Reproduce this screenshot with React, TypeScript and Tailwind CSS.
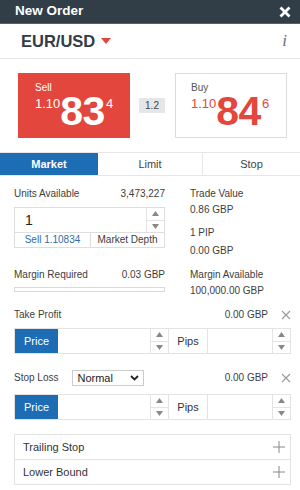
import React from "react";

const Spinner = () => (
  <div className="flex flex-col w-[18px] border-l border-[#e3e3e3] self-stretch">
    <div className="flex-1 flex items-center justify-center border-b border-[#e3e3e3]">
      <svg width="7" height="5" viewBox="0 0 7 5"><path d="M0 5 L3.5 0 L7 5 Z" fill="#888" /></svg>
    </div>
    <div className="flex-1 flex items-center justify-center">
      <svg width="7" height="5" viewBox="0 0 7 5"><path d="M0 0 L3.5 5 L7 0 Z" fill="#888" /></svg>
    </div>
  </div>
);

const PriceRow = () => (
  <div className="flex h-[26px] border border-[#e3e3e3] text-[11px]">
    <div className="w-[43px] bg-[#1d6db5] text-white flex items-center justify-center">Price</div>
    <div className="flex-1" />
    <Spinner />
    <div className="w-[39px] border-l border-[#e3e3e3] flex items-center justify-center text-[#333]">Pips</div>
    <div className="w-[65px] border-l border-[#e3e3e3]" />
    <Spinner />
  </div>
);

const Close = () => (
  <svg width="10" height="10" viewBox="0 0 10 10"><path d="M1 1 L9 9 M9 1 L1 9" stroke="#999" strokeWidth="1.1" /></svg>
);

const Plus = () => (
  <svg width="12" height="12" viewBox="0 0 12 12"><path d="M6 0 V12 M0 6 H12" stroke="#888" strokeWidth="1" /></svg>
);

export default function App() {
  return (
    <div className="w-[300px] h-[490px] bg-white overflow-hidden" style={{ fontFamily: '"Liberation Sans", Arial, sans-serif' }}>
      {/* Header */}
      <div className="h-[24px] bg-[#313e47] border-b border-[#56626a] flex items-center justify-between pl-[15px] pr-[9px]">
        <span className="text-white font-bold text-[13.5px]">New Order</span>
        <svg width="12" height="12" viewBox="0 0 12 12"><path d="M1.5 1.5 L10.5 10.5 M10.5 1.5 L1.5 10.5" stroke="#fff" strokeWidth="2.8" /></svg>
      </div>
      {/* Pair row */}
      <div className="h-[35px] border-b border-[#e6e6e6] flex items-center justify-between pl-[21px] pr-[13px]">
        <div className="flex items-center">
          <span className="font-bold text-[16.5px] text-[#333c44]">EUR/USD</span>
          <svg className="ml-[6px]" width="10" height="6" viewBox="0 0 10 6"><path d="M0 0 H10 L5 6 Z" fill="#e2463c" /></svg>
        </div>
        <span className="italic text-[17px] text-[#6b7178]" style={{ fontFamily: '"Liberation Serif", serif' }}>i</span>
      </div>
      {/* Prices */}
      <div className="flex items-center pl-[18px] pr-[13px] pt-[14px]">
        <div className="w-[112px] h-[65px] bg-[#e2463c] text-white pl-[17px] pt-[9px]">
          <div className="text-[10px] leading-[12px]">Sell</div>
          <div className="flex items-start mt-[4px]">
            <span className="text-[13px] leading-[12px]">1.10</span>
            <span className="text-[41px] leading-[30px] font-bold tracking-[-0.5px] mt-[-2px]">83</span>
            <span className="text-[13px] leading-[12px] ml-[1px]">4</span>
          </div>
        </div>
        <div className="ml-[9px] w-[26px] h-[15px] bg-[#e5e6e8] text-[10px] text-[#444] flex items-center justify-center">1.2</div>
        <div className="ml-[10px] w-[112px] h-[65px] border border-[#dcdcdc] text-[#e2463c] pl-[15px] pt-[8px]">
          <div className="text-[10px] leading-[12px] text-[#555]">Buy</div>
          <div className="flex items-start mt-[4px]">
            <span className="text-[13px] leading-[12px]">1.10</span>
            <span className="text-[41px] leading-[30px] font-bold tracking-[-0.5px] mt-[-2px]">84</span>
            <span className="text-[13px] leading-[12px] ml-[1px]">6</span>
          </div>
        </div>
      </div>
      {/* Tabs */}
      <div className="mt-[14px] flex h-[24px] border-t border-b border-[#e6e6e6] text-[11px]">
        <div className="w-[98px] bg-[#1d6db5] text-white font-bold flex items-center justify-center">Market</div>
        <div className="w-[105px] flex items-center justify-center text-[#444] border-r border-[#e6e6e6]">Limit</div>
        <div className="flex-1 flex items-center justify-center text-[#444]">Stop</div>
      </div>
      {/* Info */}
      <div className="flex pl-[14px] pt-[12px] text-[10px] leading-[12px] text-[#3d3d3d]">
        <div className="w-[151px] flex flex-col">
          <div className="flex justify-between">
            <span>Units Available</span>
            <span>3,473,227</span>
          </div>
          <div className="mt-[7px] h-[41px] border border-[#dedede] flex flex-col">
            <div className="flex flex-1">
              <div className="flex-1 pl-[10px] flex items-center text-[14px] text-[#222]">1</div>
              <Spinner />
            </div>
            <div className="h-[15px] border-t border-[#dedede] flex">
              <div className="w-[76px] flex items-center justify-center text-[#2f6ea8] border-r border-[#dedede]">Sell 1.10834</div>
              <div className="flex-1 flex items-center justify-center">Market Depth</div>
            </div>
          </div>
          <div className="mt-[21px] flex justify-between">
            <span>Margin Required</span>
            <span>0.03 GBP</span>
          </div>
          <div className="mt-[6px] h-[5px] border border-[#d9d9d9]" />
        </div>
        <div className="ml-[25px] flex flex-col">
          <span>Trade Value</span>
          <span className="mt-[4px]">0.86 GBP</span>
          <span className="mt-[11px]">1 PIP</span>
          <span className="mt-[6px]">0.00 GBP</span>
          <span className="mt-[12px]">Margin Available</span>
          <span className="mt-[4px]">100,000.00 GBP</span>
        </div>
      </div>
      {/* Take Profit */}
      <div className="pl-[14px] pr-[9px] mt-[12px] text-[10px] leading-[12px] text-[#3d3d3d]">
        <div className="flex items-center justify-between h-[12px]">
          <span>Take Profit</span>
          <div className="flex items-center">
            <span>0.00 GBP</span>
            <span className="ml-[13px] flex"><Close /></span>
          </div>
        </div>
        <div className="mt-[7px]"><PriceRow /></div>
        <div className="mt-[16px] flex items-center justify-between h-[16px]">
          <div className="flex items-center">
            <span>Stop Loss</span>
            <div className="ml-[14px] w-[72px] h-[16px] border border-[#ccc] flex items-center justify-between pl-[4px] pr-[4px] text-[11px] text-[#222]">
              <span>Normal</span>
              <svg width="9" height="6" viewBox="0 0 9 6"><path d="M1 1 L4.5 4.5 L8 1" stroke="#222" strokeWidth="1.8" fill="none" /></svg>
            </div>
          </div>
          <div className="flex items-center">
            <span>0.00 GBP</span>
            <span className="ml-[13px] flex"><Close /></span>
          </div>
        </div>
        <div className="mt-[8px]"><PriceRow /></div>
        <div className="mt-[14px] border border-[#e3e3e3] text-[11px] text-[#333]">
          <div className="h-[25px] flex items-center justify-between pl-[8px] pr-[5px] border-b border-[#e3e3e3]">
            <span>Trailing Stop</span>
            <Plus />
          </div>
          <div className="h-[24px] flex items-center justify-between pl-[8px] pr-[5px]">
            <span>Lower Bound</span>
            <Plus />
          </div>
        </div>
      </div>
    </div>
  );
}
